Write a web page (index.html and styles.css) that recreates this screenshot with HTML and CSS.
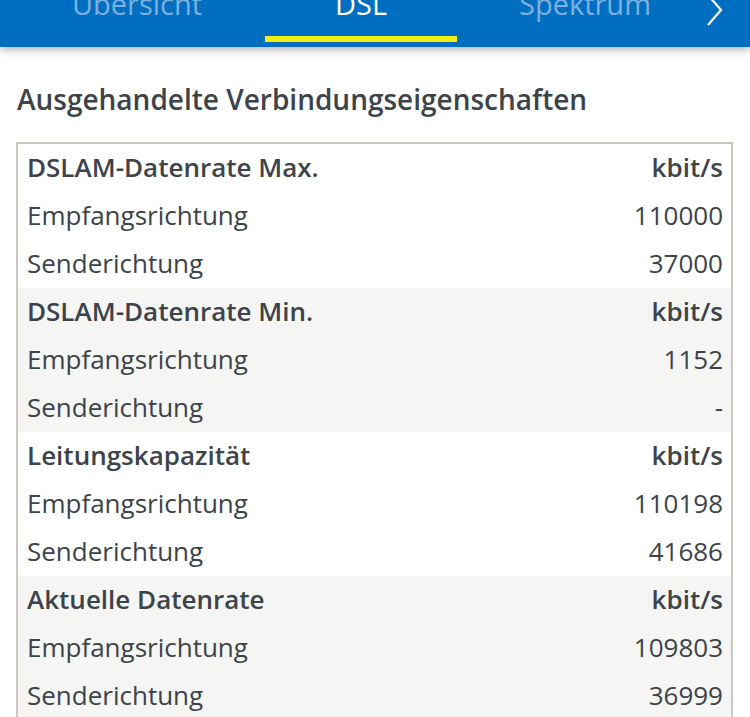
FILE: index.html
```html
<!DOCTYPE html>
<html lang="de">
<head>
<meta charset="utf-8">
<link rel="stylesheet" href="styles.css">
</head>
<body>
<header class="tabbar">
  <nav class="tabs">
    <div class="tab">Übersicht</div>
    <div class="tab active">DSL</div>
    <div class="tab">Spektrum</div>
  </nav>
  <svg class="chevron" width="20" height="34" viewBox="0 0 20 34"><polyline points="3,0 16,15 3,30" fill="none" stroke="#fff" stroke-width="2.2"/></svg>
</header>
<main class="content">
  <h1 class="title">Ausgehandelte Verbindungseigenschaften</h1>
  <div class="table">
    <div class="group">
      <div class="row head"><span>DSLAM-Datenrate Max.</span><span>kbit/s</span></div>
      <div class="row"><span>Empfangsrichtung</span><span>110000</span></div>
      <div class="row"><span>Senderichtung</span><span>37000</span></div>
    </div>
    <div class="group alt">
      <div class="row head"><span>DSLAM-Datenrate Min.</span><span>kbit/s</span></div>
      <div class="row"><span>Empfangsrichtung</span><span>1152</span></div>
      <div class="row"><span>Senderichtung</span><span>-</span></div>
    </div>
    <div class="group">
      <div class="row head"><span>Leitungskapazität</span><span>kbit/s</span></div>
      <div class="row"><span>Empfangsrichtung</span><span>110198</span></div>
      <div class="row"><span>Senderichtung</span><span>41686</span></div>
    </div>
    <div class="group alt">
      <div class="row head"><span>Aktuelle Datenrate</span><span>kbit/s</span></div>
      <div class="row"><span>Empfangsrichtung</span><span>109803</span></div>
      <div class="row"><span>Senderichtung</span><span>36999</span></div>
    </div>
  </div>
</main>
</body>
</html>
```
FILE: styles.css
```css
html, body { margin: 0; padding: 0; }
body {
  background: #fff;
  font-family: "Open Sans", "Noto Sans", sans-serif;
  color: #3c434a;
  overflow: hidden;
}
.tabbar {
  position: relative;
  height: 47px;
  background: #006ec0;
  box-shadow: 0 3px 8px rgba(0,0,0,0.28);
  display: flex;
  align-items: flex-start;
  overflow: hidden;
  z-index: 2;
}
.tabs {
  display: flex;
  gap: 32px;
  margin-left: 41px;
  margin-top: -14px;
}
.tab {
  width: 192px;
  height: 56px;
  text-align: center;
  font-family: "Open Sans", sans-serif;
  font-size: 29px;
  line-height: 36px;
  color: #7fb0dd;
  box-sizing: border-box;
}
.tab.active {
  color: #fff;
  border-bottom: 6px solid #f8eb10;
}
.chevron {
  margin-left: 24px;
  margin-top: -5px;
}
.content {
  padding: 0 17px 0 16px;
}
.title {
  margin: 37px 0 0 1px;
  font-size: 28px;
  font-weight: 600;
  line-height: 30px;
  height: 58px;
}
.table {
  border: 2px solid #c9c9c2;
  border-bottom: none;
}
.group.alt { background: #f5f5f3; }
.row {
  display: flex;
  justify-content: space-between;
  height: 48px;
  align-items: center;
  padding: 0 8px 2px 9px;
  box-sizing: border-box;
  font-size: 26px;
  line-height: 30px;
}
.row.head { font-weight: 600; }
```
